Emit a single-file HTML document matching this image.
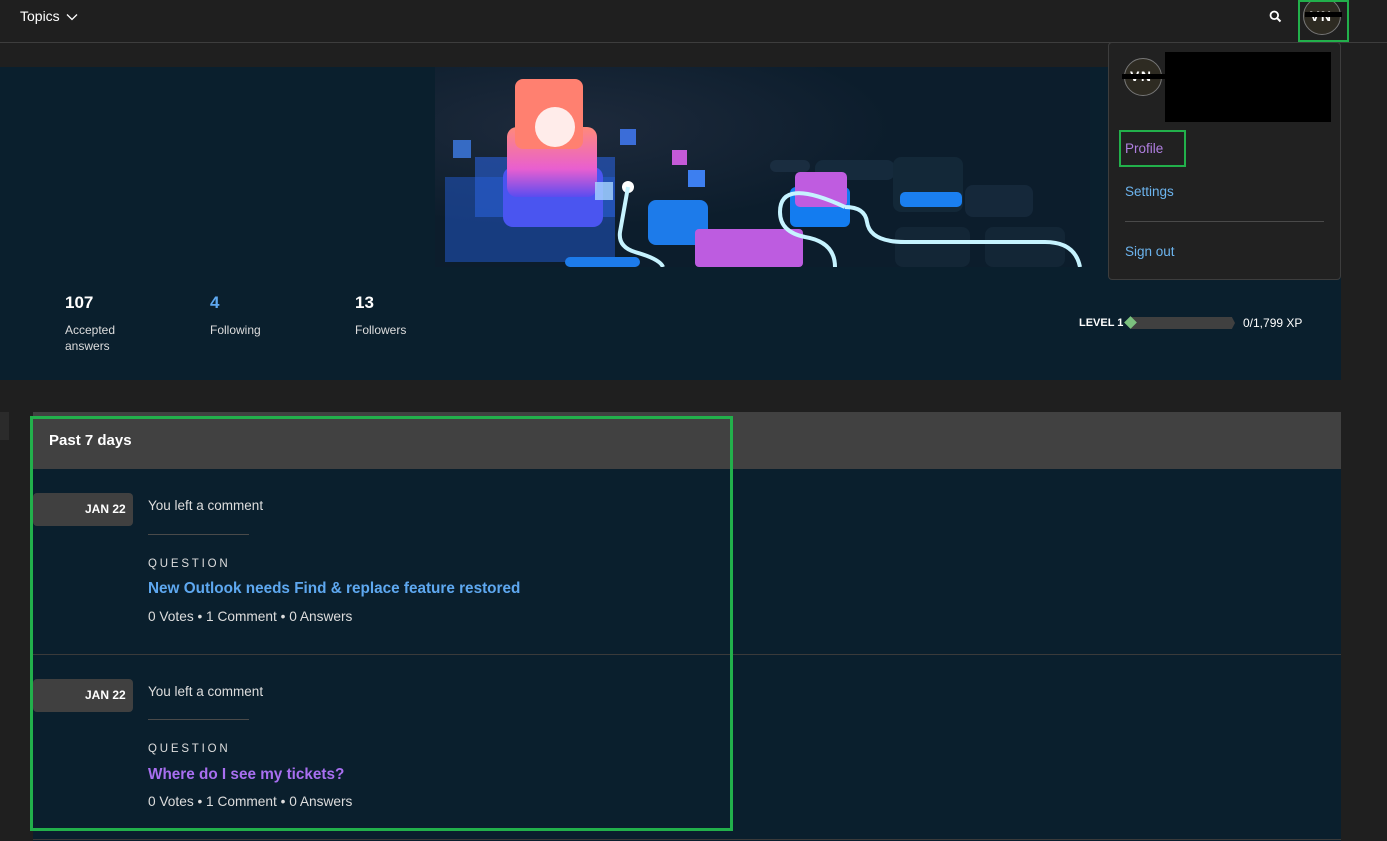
<!DOCTYPE html>
<html><head><meta charset="utf-8"><style>
*{margin:0;padding:0;box-sizing:border-box}
body{width:1387px;height:841px;background:#1f1f1f;font-family:"Segoe UI","Liberation Sans",sans-serif;color:#fff;position:relative;overflow:hidden}
.a{position:absolute}
.navy{background:#0a1f2d}
.t{font-size:13px;white-space:nowrap;line-height:18px}
</style></head><body>
<div class="a" style="left:0;top:42px;width:1387px;height:1px;background:#3d3d3d"></div>
<div class="a t" style="left:20px;top:7px;font-size:14px;color:#fff">Topics <svg width="12" height="8" viewBox="0 0 12 8" style="margin-left:2px"><path d="M1 1.5L6 6.5L11 1.5" fill="none" stroke="#fff" stroke-width="1.3"/></svg></div>
<svg class="a" style="left:1269px;top:10px" width="13" height="13" viewBox="0 0 13 13"><circle cx="5.3" cy="5.3" r="3.8" fill="none" stroke="#fff" stroke-width="1.8"/><path d="M8.2 8.2L11.5 11.5" stroke="#fff" stroke-width="2"/></svg>
<div class="a" style="left:1303px;top:-3px;width:38px;height:38px;border-radius:50%;background:#2e2b22;border:1px solid #777"></div>
<div class="a" style="left:1310px;top:7px;font-size:14px;line-height:18px;font-weight:bold;letter-spacing:1.5px">VN</div>
<div class="a" style="left:1305px;top:12px;width:37px;height:5px;background:#000"></div>
<div class="a" style="left:1298px;top:0;width:51px;height:42px;border:2px solid #22b04b"></div>

<div class="a navy" style="left:0;top:67px;width:1341px;height:313px"></div>
<svg class="a" style="left:435px;top:67px" width="655" height="200" viewBox="0 0 655 200">
<defs><radialGradient id="g1" cx="0.2" cy="0.3" r="0.5"><stop offset="0" stop-color="#1e2a3c"/><stop offset="1" stop-color="#0c1d2c"/></radialGradient>
<linearGradient id="rd" x1="0" y1="0" x2="0" y2="1"><stop offset="0" stop-color="#ff8a7a"/><stop offset="0.6" stop-color="#e85fd0"/><stop offset="1" stop-color="#5b4cf0"/></linearGradient></defs>
<rect width="655" height="200" fill="url(#g1)"/>
<rect x="10" y="110" width="170" height="85" fill="#1f52b8" opacity="0.6"/>
<rect x="40" y="90" width="140" height="60" fill="#2a60d8" opacity="0.6"/>
<rect x="68" y="100" width="100" height="60" rx="10" fill="#4a55f0"/>
<rect x="72" y="60" width="90" height="70" rx="10" fill="url(#rd)"/>
<rect x="80" y="12" width="68" height="70" rx="8" fill="#ff8070"/>
<circle cx="120" cy="60" r="20" fill="#fff" opacity="0.85"/>
<rect x="18" y="73" width="18" height="18" fill="#3f7de8" opacity="0.8"/>
<rect x="185" y="62" width="16" height="16" fill="#3b6dd8"/>
<rect x="237" y="83" width="15" height="15" fill="#c45ad8"/>
<rect x="253" y="103" width="17" height="17" fill="#3d7ff0"/>
<rect x="160" y="115" width="18" height="18" fill="#a8d6ff" opacity="0.8"/>
<circle cx="193" cy="120" r="6" fill="#fff"/>
<path d="M193 120 L185 165 Q183 180 200 185 Q225 192 228 200" fill="none" stroke="#c6f3ff" stroke-width="4"/>
<rect x="213" y="133" width="60" height="45" rx="8" fill="#1d7bea"/>
<rect x="260" y="162" width="108" height="38" rx="4" fill="#bd5ce0"/>
<rect x="130" y="190" width="75" height="10" rx="5" fill="#1d7bea"/>
<rect x="335" y="93" width="40" height="12" rx="6" fill="#1a2d40"/>
<rect x="380" y="93" width="80" height="20" rx="8" fill="#152a3c"/>
<rect x="458" y="90" width="70" height="55" rx="8" fill="#132838"/>
<rect x="355" y="120" width="60" height="40" rx="6" fill="#137cf0"/>
<rect x="360" y="105" width="52" height="35" rx="5" fill="#bf5ce0"/>
<rect x="465" y="125" width="62" height="15" rx="5" fill="#1a7ff0"/>
<rect x="530" y="118" width="68" height="32" rx="8" fill="#15283a"/>
<rect x="460" y="160" width="75" height="40" rx="8" fill="#132636"/>
<rect x="550" y="160" width="80" height="40" rx="8" fill="#132636"/>
<path d="M410 140 Q345 110 345 145 Q345 165 370 170 Q400 175 400 200 M410 140 Q430 140 432 155 Q435 175 470 175 L610 175 Q640 175 645 200" fill="none" stroke="#c6f3ff" stroke-width="4"/>
</svg>

<div class="a" style="left:65px;top:292px;font-size:17px;line-height:22px;font-weight:bold">107</div>
<div class="a t" style="left:65px;top:322px;font-size:12px;line-height:16px;color:#ddd">Accepted<br>answers</div>
<div class="a" style="left:210px;top:292px;font-size:17px;line-height:22px;font-weight:bold;color:#5ea8f0">4</div>
<div class="a t" style="left:210px;top:322px;font-size:12px;line-height:16px;color:#ddd">Following</div>
<div class="a" style="left:355px;top:292px;font-size:17px;line-height:22px;font-weight:bold">13</div>
<div class="a t" style="left:355px;top:322px;font-size:12px;line-height:16px;color:#ddd">Followers</div>
<div class="a t" style="left:1079px;top:314px;font-size:11px;font-weight:bold">LEVEL 1</div>
<div class="a" style="left:1131px;top:317px;width:104px;height:12px;background:#404040;clip-path:polygon(0 0,97% 0,100% 50%,97% 100%,0 100%)"></div>
<div class="a" style="left:1126px;top:318px;width:9px;height:9px;background:#7bc17e;transform:rotate(45deg)"></div>
<div class="a t" style="left:1243px;top:314px;font-size:12px">0/1,799 XP</div>

<div class="a" style="left:0;top:412px;width:9px;height:28px;background:#2b2b2b"></div>
<div class="a navy" style="left:33px;top:412px;width:1308px;height:429px"></div>
<div class="a" style="left:33px;top:412px;width:1308px;height:57px;background:#414141"></div>
<div class="a" style="left:49px;top:431px;font-size:15px;line-height:20px;font-weight:bold">Past 7 days</div>
<div class="a" style="left:33px;top:654px;width:1308px;height:1px;background:#3a3a3a"></div>
<div class="a" style="left:33px;top:839px;width:1308px;height:1px;background:#3a3a3a"></div>

<div class="a" style="left:33px;top:493px;width:100px;height:33px;border-radius:4px;background:#404040"></div>
<div class="a t" style="left:85px;top:500px;font-size:12px;font-weight:bold">JAN 22</div>
<div class="a t" style="left:148px;top:497px;font-size:13.5px;color:#ddd">You left a comment</div>
<div class="a" style="left:148px;top:534px;width:101px;height:1px;background:#4a4a4a"></div>
<div class="a t" style="left:148px;top:555px;font-size:11.5px;letter-spacing:2.8px;color:#ddd">QUESTION</div>
<div class="a t" style="left:148px;top:579px;font-size:15.3px;line-height:20px;font-weight:bold;color:#5ea8f0">New Outlook needs Find &amp; replace feature restored</div>
<div class="a t" style="left:148px;top:608px;font-size:13.7px;color:#ddd">0 Votes • 1 Comment • 0 Answers</div>

<div class="a" style="left:33px;top:679px;width:100px;height:33px;border-radius:4px;background:#404040"></div>
<div class="a t" style="left:85px;top:686px;font-size:12px;font-weight:bold">JAN 22</div>
<div class="a t" style="left:148px;top:683px;font-size:13.5px;color:#ddd">You left a comment</div>
<div class="a" style="left:148px;top:719px;width:101px;height:1px;background:#4a4a4a"></div>
<div class="a t" style="left:148px;top:740px;font-size:11.5px;letter-spacing:2.8px;color:#ddd">QUESTION</div>
<div class="a t" style="left:148px;top:765px;font-size:15.3px;line-height:20px;font-weight:bold;color:#a86ff0">Where do I see my tickets?</div>
<div class="a t" style="left:148px;top:793px;font-size:13.7px;color:#ddd">0 Votes • 1 Comment • 0 Answers</div>

<div class="a" style="left:30px;top:416px;width:703px;height:415px;border:3px solid #22b04b"></div>

<div class="a" style="left:1108px;top:42px;width:233px;height:238px;background:#212121;border:1px solid #3d3d3d;border-radius:4px"></div>
<div class="a" style="left:1124px;top:58px;width:38px;height:38px;border-radius:50%;background:#2e2b22;border:1px solid #777"></div>
<div class="a" style="left:1130px;top:67px;font-size:14px;line-height:18px;font-weight:bold;letter-spacing:1.5px">VN</div>
<div class="a" style="left:1122px;top:74px;width:44px;height:5px;background:#000"></div>
<div class="a" style="left:1165px;top:52px;width:166px;height:70px;background:#000"></div>
<div class="a" style="left:1119px;top:130px;width:67px;height:37px;border:2px solid #22b04b"></div>
<div class="a t" style="left:1125px;top:140px;font-size:13.5px;color:#b07fe0">Profile</div>
<div class="a t" style="left:1125px;top:183px;font-size:13.5px;color:#6cb4ee">Settings</div>
<div class="a" style="left:1125px;top:221px;width:199px;height:1px;background:#4a4a4a"></div>
<div class="a t" style="left:1125px;top:243px;font-size:13.5px;color:#6cb4ee">Sign out</div>
</body></html>
